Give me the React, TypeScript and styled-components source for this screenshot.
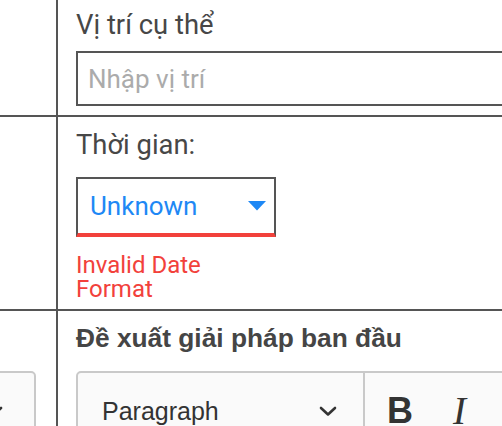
import React from "react";
import styled, { createGlobalStyle } from "styled-components";

const Global = createGlobalStyle`
  html, body { margin: 0; padding: 0; background: #fff; overflow: hidden; }
  body { font-family: Roboto, "Noto Sans", sans-serif; }
  * { box-sizing: border-box; }
`;

const Table = styled.div`
  display: grid;
  grid-template-columns: 58px 1fr;
  width: 760px;
`;

const SideCell = styled.div<{ $padTop?: number }>`
  border-right: 2px solid #555;
  border-bottom: 2px solid #555;
  overflow: hidden;
  display: flex;
  justify-content: flex-end;
  align-items: flex-start;
  padding-top: ${(p) => p.$padTop ?? 0}px;
  padding-right: 20px;
`;

const MainCell = styled.div<{ $padTop: number; $padBottom: number }>`
  border-bottom: 2px solid #555;
  padding: ${(p) => p.$padTop}px 0 ${(p) => p.$padBottom}px 18px;
  display: flex;
  flex-direction: column;
  align-items: flex-start;
`;

const Label = styled.div`
  font-family: Roboto, sans-serif;
  font-size: 27.4px;
  line-height: 32px;
  color: #474747;
`;

const TextInput = styled.input`
  margin-top: 10px;
  width: 100%;
  height: 55px;
  border: 2px solid #555;
  border-radius: 0;
  padding: 0 0 0 10px;
  font-family: Roboto, sans-serif;
  font-size: 26px;
  color: #333;
  outline: none;
  &::placeholder { color: #ababab; }
`;

const Select = styled.div`
  margin-top: 16px;
  width: 200px;
  height: 60px;
  border: 2px solid #555;
  border-bottom: 4px solid #f2413b;
  display: flex;
  align-items: center;
  justify-content: space-between;
  padding: 0 8px 0 12px;
`;

const SelectValue = styled.span`
  font-family: Roboto, sans-serif;
  font-size: 26px;
  color: #1e88f5;
`;

const ErrorText = styled.div`
  margin-top: 16px;
  width: 200px;
  font-family: Roboto, sans-serif;
  font-size: 24px;
  line-height: 24px;
  color: #f2413b;
`;

const Heading = styled.div`
  font-family: "Liberation Sans", Arial, sans-serif;
  font-weight: bold;
  font-size: 26.3px;
  line-height: 30px;
  color: #454545;
`;

const Editor = styled.div`
  margin-top: 18px;
  width: 100%;
  border: 2px solid #c9c9c9;
  border-radius: 5px;
  background: #fafafa;
`;

const Toolbar = styled.div`
  display: flex;
  align-items: stretch;
  height: 76px;
`;

const FormatGroup = styled.div`
  width: 287px;
  border-right: 2px solid #c9c9c9;
  display: flex;
  align-items: center;
  justify-content: space-between;
  padding: 0 26px 0 24px;
`;

const FormatLabel = styled.span`
  font-family: "Liberation Sans", Arial, sans-serif;
  font-size: 25px;
  color: #333;
`;

const ToolButtons = styled.div`
  display: flex;
  align-items: center;
  gap: 40px;
  padding-left: 22px;
`;

const BoldGlyph = styled.span`
  font-family: "Liberation Sans", Arial, sans-serif;
  font-weight: bold;
  font-size: 36px;
  line-height: 40px;
  color: #333;
`;

const ItalicGlyph = styled.span`
  font-family: "Liberation Serif", "Times New Roman", serif;
  font-style: italic;
  font-size: 39px;
  line-height: 40px;
  color: #333;
`;

const SideSelect = styled.div`
  flex: none;
  width: 110px;
  height: 90px;
  border: 2px solid #c9c9c9;
  border-radius: 5px;
  background: #fafafa;
  display: flex;
  justify-content: flex-end;
  align-items: flex-start;
  padding: 33px 31px 0 0;
`;

const Caret = () => (
  <svg width="18" height="10" viewBox="0 0 18 10">
    <path d="M0 0 L18 0 L9 9.5 Z" fill="#1e88f5" />
  </svg>
);

const Chevron = () => (
  <svg width="18" height="11" viewBox="0 0 18 11">
    <path d="M2 2 L9 8.5 L16 2" fill="none" stroke="#333" strokeWidth="2.6" strokeLinecap="round" strokeLinejoin="round" />
  </svg>
);

export default function App() {
  return (
    <>
      <Global />
      <Table>
        <SideCell />
        <MainCell $padTop={9} $padBottom={9}>
          <Label>Vị trí cụ thể</Label>
          <TextInput placeholder="Nhập vị trí" />
        </MainCell>

        <SideCell />
        <MainCell $padTop={12} $padBottom={8}>
          <Label>Thời gian:</Label>
          <Select>
            <SelectValue>Unknown</SelectValue>
            <Caret />
          </Select>
          <ErrorText>Invalid Date Format</ErrorText>
        </MainCell>

        <SideCell $padTop={60}>
          <SideSelect>
            <Chevron />
          </SideSelect>
        </SideCell>
        <MainCell $padTop={12} $padBottom={40}>
          <Heading>Đề xuất giải pháp ban đầu</Heading>
          <Editor>
            <Toolbar>
              <FormatGroup>
                <FormatLabel>Paragraph</FormatLabel>
                <Chevron />
              </FormatGroup>
              <ToolButtons>
                <BoldGlyph>B</BoldGlyph>
                <ItalicGlyph>I</ItalicGlyph>
              </ToolButtons>
            </Toolbar>
          </Editor>
        </MainCell>
      </Table>
    </>
  );
}
